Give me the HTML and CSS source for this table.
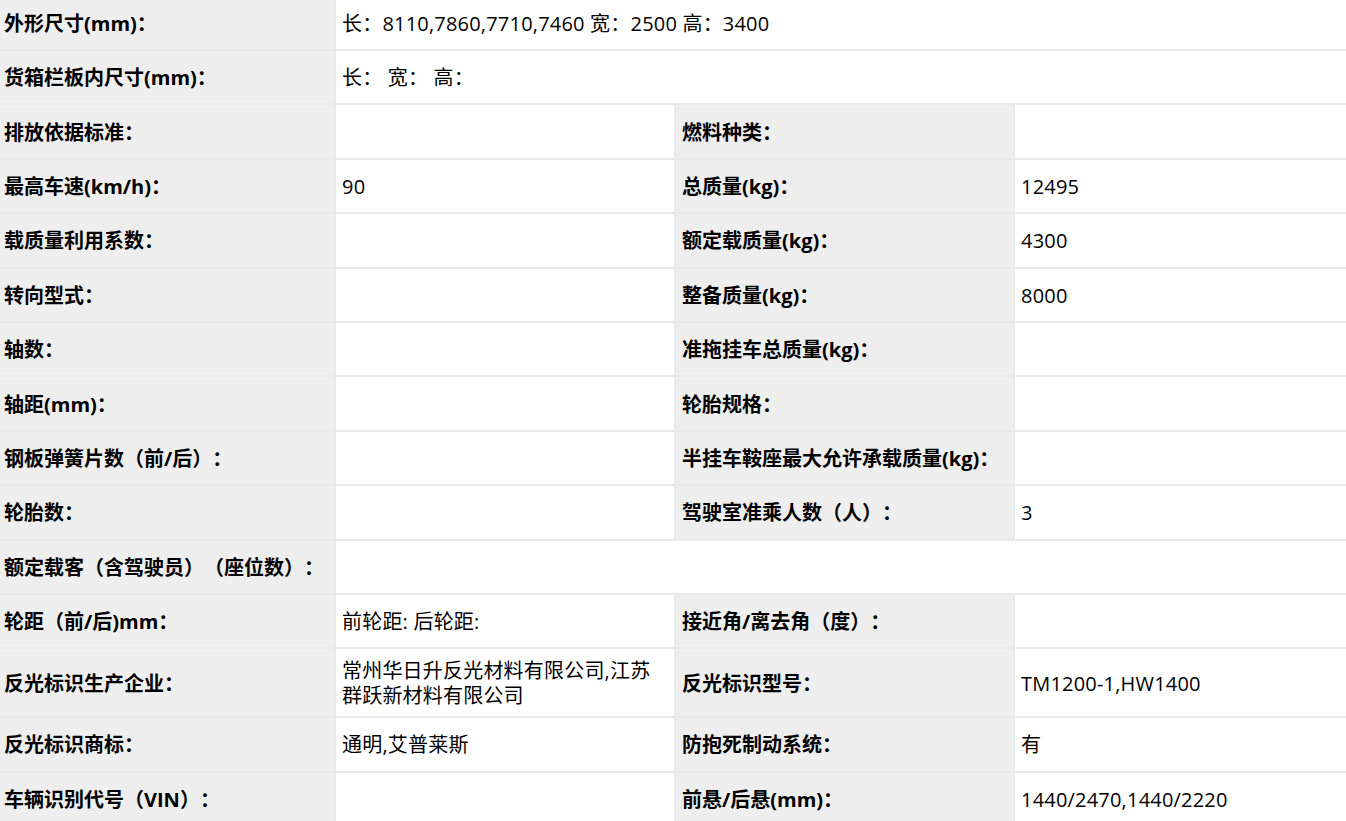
FILE: index.html
```html
<!DOCTYPE html>
<html lang="zh-CN">
<head>
<meta charset="utf-8">
<title>参数</title>
<link rel="stylesheet" href="styles.css">
</head>
<body>
<table class="spec">
  <colgroup>
    <col class="c1"><col class="c2"><col class="c3"><col class="c4">
  </colgroup>
  <tbody>
    <tr><td class="lbl">外形尺寸(mm)：</td><td class="val" colspan="3">长：8110,7860,7710,7460 宽：2500 高：3400</td></tr>
    <tr><td class="lbl">货箱栏板内尺寸(mm)：</td><td class="val" colspan="3">长：&nbsp;宽：&nbsp;高：</td></tr>
    <tr><td class="lbl">排放依据标准：</td><td class="val"></td><td class="lbl">燃料种类：</td><td class="val"></td></tr>
    <tr><td class="lbl">最高车速(km/h)：</td><td class="val">90</td><td class="lbl">总质量(kg)：</td><td class="val">12495</td></tr>
    <tr><td class="lbl">载质量利用系数：</td><td class="val"></td><td class="lbl">额定载质量(kg)：</td><td class="val">4300</td></tr>
    <tr><td class="lbl">转向型式：</td><td class="val"></td><td class="lbl">整备质量(kg)：</td><td class="val">8000</td></tr>
    <tr><td class="lbl">轴数：</td><td class="val"></td><td class="lbl">准拖挂车总质量(kg)：</td><td class="val"></td></tr>
    <tr><td class="lbl">轴距(mm)：</td><td class="val"></td><td class="lbl">轮胎规格：</td><td class="val"></td></tr>
    <tr><td class="lbl">钢板弹簧片数（前/后）：</td><td class="val"></td><td class="lbl">半挂车鞍座最大允许承载质量(kg)：</td><td class="val"></td></tr>
    <tr><td class="lbl">轮胎数：</td><td class="val"></td><td class="lbl">驾驶室准乘人数（人）：</td><td class="val">3</td></tr>
    <tr><td class="lbl">额定载客（含驾驶员）（座位数）：</td><td class="val" colspan="3"></td></tr>
    <tr><td class="lbl">轮距（前/后)mm：</td><td class="val">前轮距: 后轮距:</td><td class="lbl">接近角/离去角（度）：</td><td class="val"></td></tr>
    <tr><td class="lbl">反光标识生产企业：</td><td class="val">常州华日升反光材料有限公司,江苏群跃新材料有限公司</td><td class="lbl">反光标识型号：</td><td class="val">TM1200-1,HW1400</td></tr>
    <tr><td class="lbl">反光标识商标：</td><td class="val">通明,艾普莱斯</td><td class="lbl">防抱死制动系统：</td><td class="val">有</td></tr>
    <tr><td class="lbl">车辆识别代号（VIN）：</td><td class="val"></td><td class="lbl">前悬/后悬(mm)：</td><td class="val">1440/2470,1440/2220</td></tr>
  </tbody>
</table>
</body>
</html>
```

FILE: styles.css
```css
html, body {
  margin: 0;
  padding: 0;
  background: #ffffff;
  overflow: hidden;
}

.spec {
  margin: -5.4px 0 0 -4px;
  border-collapse: collapse;
  table-layout: fixed;
  width: 1354px;
  font-family: "Open Sans", "Noto Sans CJK SC", sans-serif;
  font-size: 20px;
  line-height: 25px;
  color: #000;
  text-spacing-trim: space-all;
}

.c1 { width: 338px; }
.c2 { width: 340px; }
.c3 { width: 339px; }
.c4 { width: 337px; }

.spec td {
  height: 54.4px;
  box-sizing: border-box;
  padding: 9px 2px 8px 6px;
  border: 2px solid #e9e9e9;
  vertical-align: middle;
  text-align: left;
}

.spec .lbl {
  background: #eeeeee;
  font-weight: 700;
  white-space: nowrap;
}

.spec .val {
  background: #ffffff;
  letter-spacing: 0.2px;
  padding-right: 14px;
}
```
